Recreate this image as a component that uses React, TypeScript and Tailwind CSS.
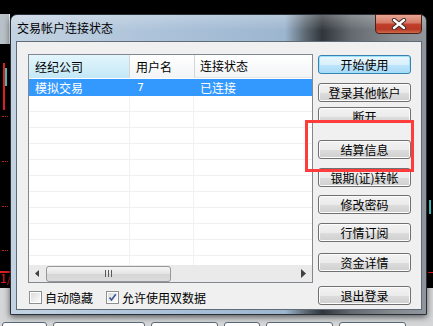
import React from 'react'

const font = "font-['Noto_Sans_CJK_SC','Noto_Sans',sans-serif]"

const Btn: React.FC<{ label: string; focus?: boolean; className?: string }> = ({ label, focus, className }) => (
    <div
        className={`h-[19px] w-[93px] shrink-0 rounded-[3px] border flex items-center justify-center text-[12px] leading-none text-black ${
            focus
                ? 'border-[#3c7fb1] bg-[linear-gradient(#eaf6fd_0%,#d9f0fc_50%,#bee6fd_51%,#a7d9f5_100%)] shadow-[inset_0_0_0_1px_#9be3fb]'
                : 'border-[#707070] bg-[linear-gradient(#f2f2f2_0%,#ebebeb_50%,#dddddd_51%,#cfcfcf_100%)] shadow-[inset_0_0_0_1px_#fcfcfc]'
        } ${className ?? ''}`}
    >
        {label}
    </div>
)

const CheckBox: React.FC<{ checked?: boolean; label: string }> = ({ checked, label }) => (
    <div className="flex items-center gap-[3px]">
        <div className="w-[13px] h-[13px] border border-[#8e8f8f] bg-white p-[1px]">
            <div className="w-full h-full bg-[linear-gradient(135deg,#dcdcdc,#fbfbfb)] relative">
                {checked && (
                    <svg viewBox="0 0 9 9" className="absolute inset-0 w-full h-full">
                        <path d="M1.5 4.5 L3.5 7 L7.8 1.2" fill="none" stroke="#3a5596" strokeWidth="1.6" />
                    </svg>
                )}
            </div>
        </div>
        <span className="text-[12px] leading-none text-black">{label}</span>
    </div>
)

export default function App() {
    const rows = Array.from({ length: 12 })

    return (
        <div className={`relative w-[433px] h-[326px] overflow-hidden bg-black ${font}`}>
            {/* background app bits */}
            <div className="absolute left-0 top-[14px] w-[10px] h-[30px] bg-[#b9c1c8] border-r border-white" />
            <div className="absolute left-[3px] top-[63px] w-[2px] h-[47px] bg-[#e02020]" />
            <div className="absolute left-[5px] top-[68px] w-[2px] h-[18px] bg-[#3fc7c7]" />
            <div className="absolute left-[2px] top-[116px] w-[6px] h-[1px] border-t border-dotted border-[#c02020]" />
            <div className="absolute left-[2px] top-[161px] w-[6px] h-[1px] border-t border-dotted border-[#c02020]" />
            <div className="absolute left-[2px] top-[206px] w-[6px] h-[1px] border-t border-dotted border-[#c02020]" />
            <div className="absolute left-[2px] top-[250px] w-[6px] h-[1px] border-t border-dotted border-[#c02020]" />
            <div className="absolute left-0 top-[271px] w-[10px] h-[2px] bg-[#e02020]" />
            <div className="absolute left-0 top-[272px] text-[12px] leading-none text-[#e02020]">1/</div>
            <div className="absolute left-0 top-[288px] w-[433px] h-[38px] bg-[#d4d6d8]" />
            <div className="absolute left-0 top-[322px] w-[433px] flex gap-[6px] pl-[2px]">
                {[45, 92, 67, 36, 67, 67].map((w, i) => (
                    <div key={i} style={{ width: w }} className="h-[8px] rounded-t-[3px] border border-[#5a6a7a] bg-white" />
                ))}
            </div>
            <div className="absolute left-[429px] top-[200px] w-[2px] h-[14px] bg-[#3fc7c7]" />
            <div className="absolute left-[428px] top-[272px] w-[5px] h-[1px] bg-[#e02020]" />

            {/* dialog window */}
            <div className="absolute left-[10px] top-[14px] w-[417px] h-[301px] rounded-t-[7px] border border-[#2a3038] flex flex-col bg-[linear-gradient(to_right,#c4d3e2_0%,#a9c0d8_40%,#9db6cf_66%,#5c6771_71%,#30353b_75%,#63696f_82%,#858a8f_92%,#8f959b_100%)] shadow-[0_2px_6px_rgba(0,0,0,0.6)]">
                <div className="relative h-[26px] shrink-0 flex items-center pl-[6px] bg-[linear-gradient(rgba(255,255,255,0.25),rgba(255,255,255,0)_60%)] rounded-t-[6px]">
                    <span className="text-[12px] leading-none text-black">交易帐户连接状态</span>
                    <div className="absolute right-[4px] top-[-1px] w-[47px] h-[20px] rounded-b-[4px] border border-[#4a2018] bg-[linear-gradient(#e9a694_0%,#d57a66_45%,#c2402c_50%,#b83a26_80%,#d06a4a_100%)] flex items-center justify-center">
                        <svg width="16" height="12" viewBox="0 0 16 12">
                            <path d="M3 2 L13 10 M13 2 L3 10" stroke="#3a2a28" strokeWidth="4.2" strokeLinecap="round" />
                            <path d="M3 2 L13 10 M13 2 L3 10" stroke="#ffffff" strokeWidth="2.4" strokeLinecap="round" />
                        </svg>
                    </div>
                </div>

                <div className="flex-1 ml-[5px] mr-[4px] mb-[4px] border border-[#5f6b77] bg-[#f0f0f0] flex pl-[11px] pt-[12px] gap-[5px]">
                    <div className="flex flex-col w-[285px]">
                        {/* list view */}
                        <div className="h-[229px] border border-[#828790] bg-white flex flex-col overflow-hidden">
                            <div className="flex h-[23px] shrink-0 text-[12px] leading-none text-black">
                                <div className="w-[101px] flex items-center pl-[6px] bg-[linear-gradient(#e3f5fc,#c4e8f7)] border-r border-[#d5d5d5]">经纪公司</div>
                                <div className="w-[65px] flex items-center pl-[6px] bg-[linear-gradient(#ffffff,#f3f4f6)] border-r border-[#d5d5d5]">用户名</div>
                                <div className="flex-1 flex items-center pl-[5px] bg-[linear-gradient(#ffffff,#f3f4f6)] border-b border-[#e5e5e5]">连接状态</div>
                            </div>
                            <div className="flex-1 overflow-hidden">
                                <div className="flex h-[17px] bg-[#3399ff] text-white text-[12px] leading-none mt-[1px]">
                                    <div className="w-[101px] flex items-center pl-[6px]">模拟交易</div>
                                    <div className="w-[65px] flex items-center pl-[7px] font-['DejaVu_Sans',sans-serif] text-[11px]">7</div>
                                    <div className="flex-1 flex items-center pl-[5px]">已连接</div>
                                </div>
                                {rows.map((_, i) => (
                                    <div key={i} className="flex h-[16px] border-b border-[#f0f0f0]">
                                        <div className="w-[101px] border-r border-[#f0f0f0]" />
                                        <div className="w-[64px] border-r border-[#f0f0f0]" />
                                        <div className="flex-1" />
                                    </div>
                                ))}
                            </div>
                            {/* horizontal scrollbar */}
                            <div className="h-[17px] shrink-0 bg-[#eaeaea] flex items-center">
                                <div className="w-[17px] h-full flex items-center justify-center">
                                    <svg width="5" height="7" viewBox="0 0 5 7"><path d="M4 0 L0 3.5 L4 7 Z" fill="#404040" /></svg>
                                </div>
                                <div className="w-[125px] h-[16px] rounded-[3px] border border-[#979797] bg-[linear-gradient(#f5f5f5,#e4e4e4_50%,#d6d6d6_51%,#dcdcdc)] flex items-center justify-center gap-[2px]">
                                    <div className="w-[1px] h-[7px] bg-[#5a5a5a]" />
                                    <div className="w-[1px] h-[7px] bg-[#5a5a5a]" />
                                    <div className="w-[1px] h-[7px] bg-[#5a5a5a]" />
                                </div>
                                <div className="flex-1" />
                                <div className="w-[17px] h-full flex items-center justify-center">
                                    <svg width="5" height="9" viewBox="0 0 5 9"><path d="M0 0 L5 4.5 L0 9 Z" fill="#404040" /></svg>
                                </div>
                            </div>
                        </div>
                        <div className="flex items-center gap-[13px] mt-[8px] pl-[1px]">
                            <CheckBox label="自动隐藏" />
                            <CheckBox label="允许使用双数据" checked />
                        </div>
                    </div>

                    <div className="flex flex-col pt-[1px]">
                        <Btn label="开始使用" focus />
                        <Btn label="登录其他帐户" className="mt-[9px]" />
                        <div className="mt-[5px] h-[16px] overflow-hidden shrink-0">
                            <Btn label="断开" />
                        </div>
                        <Btn label="结算信息" className="mt-[17px]" />
                        <Btn label="银期(证)转帐" className="mt-[9px]" />
                        <Btn label="修改密码" className="mt-[8px]" />
                        <Btn label="行情订阅" className="mt-[9px]" />
                        <Btn label="资金详情" className="mt-[11px]" />
                        <Btn label="退出登录" className="mt-[14px]" />
                    </div>
                </div>
            </div>

            {/* annotation */}
            <div className="absolute left-[305px] top-[120px] w-[109px] h-[52px] border-[3px] border-[#ff3c3c]" />
        </div>
    )
}
